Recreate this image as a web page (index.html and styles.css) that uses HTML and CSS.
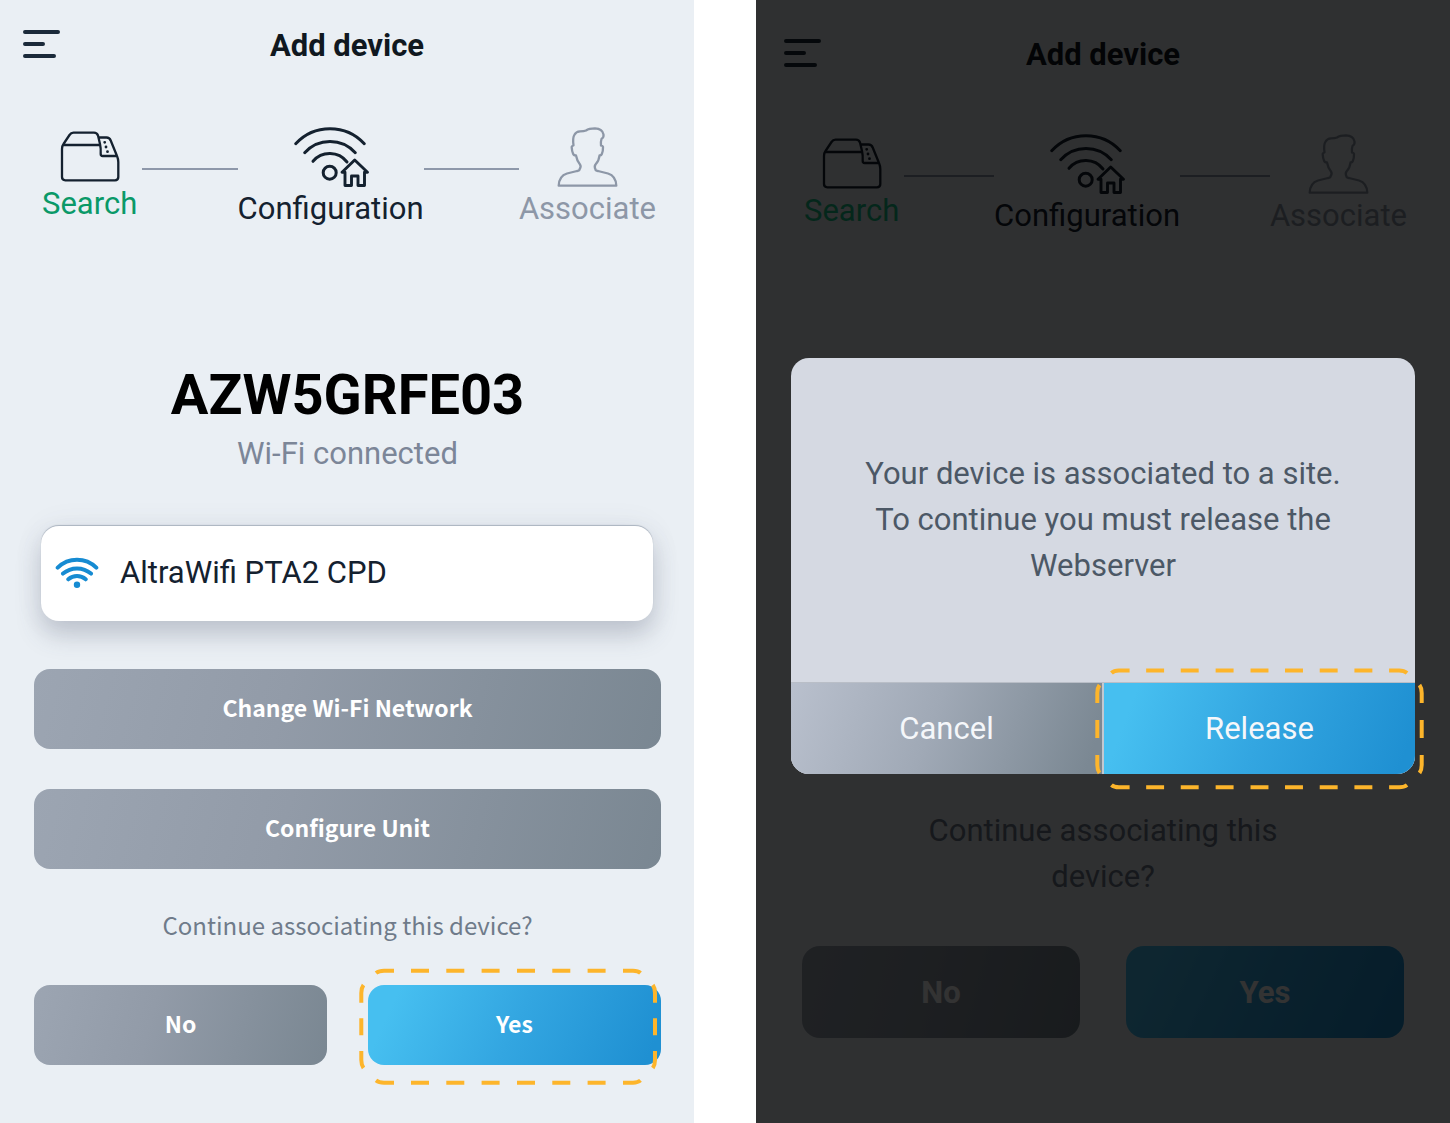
FILE: index.html
```html
<!DOCTYPE html>
<html lang="en">
<head>
<meta charset="utf-8">
<meta name="viewport" content="width=device-width, initial-scale=1">
<title>Add device</title>
<link rel="stylesheet" href="styles.css">
</head>
<body>
<svg class="sprite" aria-hidden="true">
  <symbol id="icon-menu" viewBox="0 0 38 28">
    <path d="M2 2H35M2 14H20M2 26H31" stroke-width="4" stroke-linecap="round"/>
  </symbol>
  <symbol id="icon-box" viewBox="0 -1 60 54">
    <path d="M2 18Q2 15 3.500 13L9.500 4Q11 1.700 13.500 1.700H34Q37 1.700 38 4.500L40 13Q41 17 40.700 23Q40.700 25 42.700 25H56M3 14H39.500M38.500 6.500H46.500Q49.500 6.500 50.700 9.500L57 25Q58.300 28 58.300 31V46Q58.300 49.300 55 49.300H5.300Q2 49.300 2 46V18" stroke-width="2.300" stroke-linejoin="round"/>
    <path d="M44.700 11.300h.01M46 16h.01M47.500 20.700h.01" stroke-width="2.800" stroke-linecap="round"/>
  </symbol>
  <symbol id="icon-network" viewBox="0 0 80 64">
    <path d="M4.700 18.700A46.700 46.700 0 0 1 73.300 18.700M13.700 27.700A34 34 0 0 1 64.300 27.700M22 36.300A22 22 0 0 1 56 37" stroke-width="3" stroke-linecap="round"/>
    <circle cx="38.700" cy="47.700" r="6.500" stroke-width="3"/>
    <path d="M51 47.300L63.700 35L76.500 47.300H73.500V60.500H67V51H60.500V60.500H54V47.300Z" stroke-width="2.900" stroke-linejoin="round"/>
  </symbol>
  <symbol id="icon-person" viewBox="0 0 62 64">
    <path d="M2.700 60.700Q3 51 11 48.500L21 46Q23.500 45.500 23.500 44.500Q25.500 41.500 24 39.500Q21 36 20 30.500Q17.500 30.500 17 28.500Q16 26.500 15.700 22.500Q15.500 21 17.500 20.500Q16.500 13 18.300 10Q20 6.500 24 6.300Q28 6.300 30 5.500Q33 3.300 39 3.300Q46.500 3.500 47.500 9.500Q48 12.500 45.500 14Q44.500 17 45 20.500Q47.300 21 47 22.500Q47 26.500 46 28.500Q45.500 30.500 43.500 30.500Q43 36 39.500 39.500Q38 41.500 39.500 44.500Q39.500 45.500 42 46L52 48.500Q60 51 60.300 60.700Z" stroke-width="2.300" stroke-linejoin="round"/>
  </symbol>
  <symbol id="icon-wifi" viewBox="0 0 44 34">
    <path d="M2.700 11.700A27.500 27.500 0 0 1 41.300 11.700M8 17.600A21.500 21.500 0 0 1 36 17.600M13.300 23.300A13.500 13.500 0 0 1 30.700 23.300" stroke-width="4" stroke-linecap="round"/>
    <circle cx="22" cy="28.700" r="1.600" stroke-width="3.200"/>
  </symbol>
</svg>

<section class="screen">
  <header class="topbar">
    <button class="menu" type="button" aria-label="Menu"><svg class="icon"><use href="#icon-menu"/></svg></button>
    <h1 class="title">Add device</h1>
  </header>
  <ol class="steps">
    <li class="step step-done"><svg class="icon icon-box"><use href="#icon-box"/></svg><span class="step-label">Search</span></li>
    <li class="connector" aria-hidden="true"></li>
    <li class="step"><svg class="icon icon-network"><use href="#icon-network"/></svg><span class="step-label">Configuration</span></li>
    <li class="connector" aria-hidden="true"></li>
    <li class="step step-next"><svg class="icon icon-person"><use href="#icon-person"/></svg><span class="step-label">Associate</span></li>
  </ol>
  <main class="content">
    <h2 class="device">AZW5GRFE03</h2>
    <p class="status">Wi-Fi connected</p>
    <div class="network">
      <svg class="icon icon-wifi"><use href="#icon-wifi"/></svg>
      <span>AltraWifi PTA2 CPD</span>
    </div>
    <div class="actions">
      <button class="btn" type="button">Change Wi-Fi Network</button>
      <button class="btn" type="button">Configure Unit</button>
    </div>
    <p class="question">Continue associating this device?</p>
    <div class="choices">
      <button class="btn" type="button">No</button>
      <div class="marked">
        <button class="btn btn-primary" type="button">Yes</button>
        <svg class="marker" viewBox="0 0 298 117" preserveAspectRatio="none" aria-hidden="true">
          <path d="M17 5Q20 2.700 25 2.700H35M52 2.700h18M87.300 2.700h18M122.600 2.700h18M158 2.700h18M193.300 2.700h18M228.600 2.700h18M264 2.700h10Q279 2.700 281.500 5"/>
          <path d="M17 112.400Q20 114.700 25 114.700H35M52 114.700h18M87.300 114.700h18M122.600 114.700h18M158 114.700h18M193.300 114.700h18M228.600 114.700h18M264 114.700h10Q279 114.700 281.500 112.400"/>
          <path d="M4.500 17Q2.300 20 2.300 25V34.700M2.300 50.300v17M2.300 83v9Q2.300 97 4.500 100"/>
          <path d="M293.800 17Q296 20 296 25V34.700M296 50.300v17M296 83v9Q296 97 293.800 100"/>
        </svg>
      </div>
    </div>
  </main>
</section>

<section class="screen screen-compact">
  <header class="topbar">
    <button class="menu" type="button" aria-label="Menu"><svg class="icon"><use href="#icon-menu"/></svg></button>
    <h1 class="title">Add device</h1>
  </header>
  <ol class="steps">
    <li class="step step-done"><svg class="icon icon-box"><use href="#icon-box"/></svg><span class="step-label">Search</span></li>
    <li class="connector" aria-hidden="true"></li>
    <li class="step"><svg class="icon icon-network"><use href="#icon-network"/></svg><span class="step-label">Configuration</span></li>
    <li class="connector" aria-hidden="true"></li>
    <li class="step step-next"><svg class="icon icon-person"><use href="#icon-person"/></svg><span class="step-label">Associate</span></li>
  </ol>
  <main class="content">
    <p class="question">Continue associating this device?</p>
    <div class="choices">
      <button class="btn" type="button">No</button>
      <button class="btn btn-primary" type="button">Yes</button>
    </div>
  </main>
  <div class="overlay">
    <div class="dialog" role="dialog" aria-labelledby="dialog-text">
      <p class="dialog-text" id="dialog-text">Your device is associated to a site. To continue you must release the Webserver</p>
      <div class="dialog-actions">
        <button class="dialog-btn" type="button">Cancel</button>
        <div class="marked">
          <button class="dialog-btn dialog-btn-primary" type="button">Release</button>
          <svg class="marker" viewBox="0 0 330 122" preserveAspectRatio="none" aria-hidden="true">
            <path d="M16.500 5Q19 2.500 24 2.500H34.700M51.300 2.500h18M86 2.500h18M121 2.500h18M156 2.500h18M190.600 2.500h18M225.400 2.500h18M260.200 2.500h18M295 2.500h10Q310 2.500 313 5"/>
            <path d="M16.500 117Q19 119.300 24 119.300H34.700M51.300 119.300h18M86 119.300h18M121 119.300h18M156 119.300h18M190.600 119.300h18M225.400 119.300h18M260.200 119.300h18M295 119.300h10Q310 119.300 313 117"/>
            <path d="M4.500 17Q2.300 20 2.300 25V35M2.300 52v18M2.300 87v10Q2.300 102 4.500 105"/>
            <path d="M325.500 17Q327.700 20 327.700 25V35M327.700 52v18M327.700 87v10Q327.700 102 325.500 105"/>
          </svg>
        </div>
      </div>
    </div>
  </div>
</section>
</body>
</html>
```
FILE: styles.css
```css
* { box-sizing: border-box; }

body {
  margin: 0;
  min-height: 100vh;
  display: flex;
  gap: 62px;
  background: #fff;
  color: #14212f;
  font-family: Roboto, "Liberation Sans", sans-serif;
  font-size: 31px;
}

h1, h2, p, ol { margin: 0; padding: 0; }
ol { list-style: none; }
button { border: 0; padding: 0; font: inherit; cursor: pointer; }

.sprite { position: absolute; width: 0; height: 0; }
.icon { display: block; flex: none; fill: none; stroke: currentColor; }

.screen {
  position: relative;
  flex: 1 1 0;
  min-width: 0;
  background: #eaeff4;
}

.topbar {
  display: grid;
  grid-template-columns: 1fr auto 1fr;
  align-items: start;
  padding: 24px 23px 0;
}
.menu { width: 38px; margin-top: 6px; background: none; color: #1b2a3a; }
.menu .icon { width: 38px; height: 28px; }
.title { font-size: 31px; line-height: 44px; font-weight: 700; color: #101820; }

.steps {
  display: flex;
  align-items: center;
  padding: 57px 38px 0 42px;
}
.step { display: flex; flex-direction: column; align-items: center; color: #14212f; }
.step-label { line-height: 40px; }
.step-done .step-label { color: #0a9968; }
.step-next { color: #8d97a7; }
.icon-box { width: 60px; height: 54px; }
.icon-network { width: 80px; height: 64px; }
.icon-person { width: 62px; height: 64px; }
.connector { flex: 1; height: 2px; margin-bottom: 16px; background: #8e98aa; }
.step-done + .connector { margin-left: 5px; }

.content { padding: 130px 33px 56px 34px; }
.device { font-size: 56px; line-height: 72px; font-weight: 700; color: #000; text-align: center; }
.status { margin-top: 3px; line-height: 40px; color: #7c8698; text-align: center; }

.network {
  display: flex;
  align-items: center;
  gap: 21px;
  height: 95px;
  margin: 52px 8px 0 7px;
  padding: 0 14px 2px;
  border-radius: 18px;
  background: #fff;
  box-shadow: 0 -1px 1px #aab3bf, 0 14px 24px rgba(70, 80, 105, .25), 0 0 30px rgba(90, 90, 110, .07);
}
.icon-wifi { width: 44px; height: 34px; color: #168bd2; }

.actions { display: grid; gap: 40px; margin-top: 48px; }
.btn {
  display: block;
  width: 100%;
  height: 80px;
  padding-bottom: 4px;
  border-radius: 16px;
  background: linear-gradient(105deg, #9ca5b2, #929ba8 40%, #7a8792);
  color: #fff;
  font-family: "Noto Sans CJK SC", sans-serif;
  font-size: 23px;
  font-weight: 700;
}
.btn-primary { background: linear-gradient(115deg, #46bff0 10%, #33a6e1 50%, #1f90d2 95%); }

.question {
  margin-top: 37px;
  font-family: "Noto Sans CJK SC", sans-serif;
  font-size: 24px;
  line-height: 38px;
  color: #6f7b8a;
  text-align: center;
}
.choices { display: grid; grid-template-columns: 1fr 1fr; gap: 41px; margin-top: 41px; }

.marked { position: relative; }
.marker {
  position: absolute;
  top: -17px;
  left: -9px;
  width: calc(100% + 5px);
  height: calc(100% + 37px);
  fill: none;
  stroke: #fdb52b;
  stroke-width: 4px;
  pointer-events: none;
}

.screen-compact .topbar { padding: 33px 28px 0; }
.screen-compact .steps { padding: 55px 43px 0 48px; }
.screen-compact .step-done .step-label { color: #18c088; }
.screen-compact .content { padding: 572px 46px 85px; }
.screen-compact .question {
  max-width: 380px;
  margin: 0 auto;
  font-family: inherit;
  font-size: 31px;
  line-height: 46px;
}
.screen-compact .choices { gap: 46px; margin-top: 46px; }
.screen-compact .btn { height: 92px; padding: 0; border-radius: 18px; font-family: inherit; font-size: 31px; }

.overlay {
  position: absolute;
  inset: 0;
  display: flex;
  flex-direction: column;
  padding: 358px 35px 0;
  background: rgba(0, 0, 0, .8);
}
.dialog { border-radius: 18px; background: #d5d9e2; }
.dialog-text {
  padding: 93px 60px;
  line-height: 46px;
  color: #4c5866;
  text-align: center;
}
.dialog-actions {
  display: grid;
  grid-template-columns: 1fr 1fr;
  gap: 2px;
  border-top: 1px solid #b9bec7;
  border-radius: 0 0 18px 18px;
  background: #c3c8d0;
}
.dialog-btn {
  display: block;
  width: 100%;
  height: 91px;
  border-radius: 0 0 0 18px;
  background: linear-gradient(110deg, #b9c0cd, #a0a9b6 45%, #7b8893 95%);
  color: #f5f7fa;
}
.dialog-btn-primary {
  border-radius: 0 0 18px 0;
  background: linear-gradient(110deg, #46bff0 10%, #33a6e1 50%, #1f90d2 95%);
}
.dialog .marker { top: -15px; width: calc(100% + 18px); height: calc(100% + 31px); }
```
